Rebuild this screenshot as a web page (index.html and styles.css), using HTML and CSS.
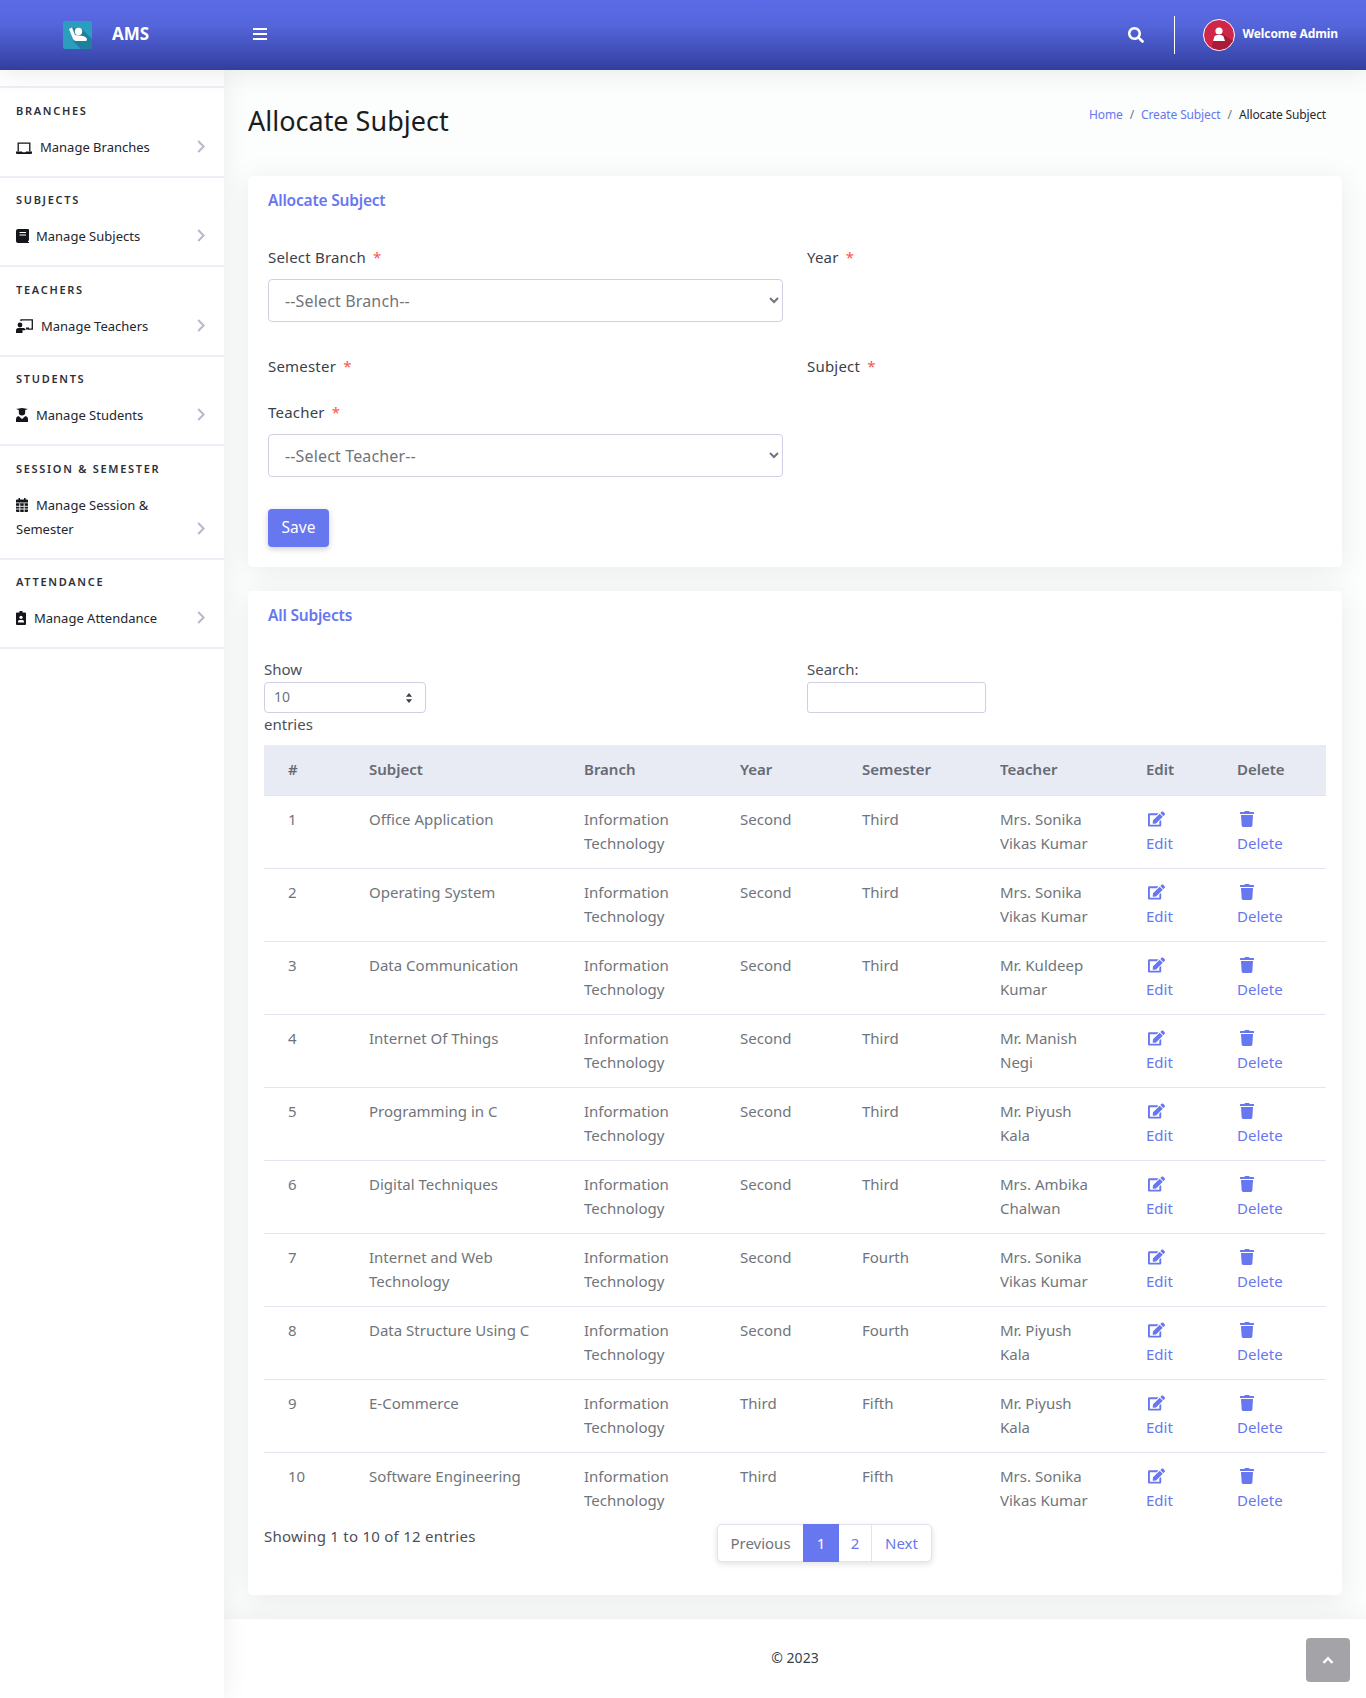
FILE: index.html
```html
<!DOCTYPE html>
<html lang="en">
<head>
  <meta charset="UTF-8">
  <meta name="viewport" content="width=device-width,initial-scale=1.0">
  <title>Allocate Subject</title>
  <link rel="stylesheet" href="styles.css">
</head>
<body>
  <svg class="sprite" aria-hidden="true">
    <symbol id="i-edit" viewBox="0 0 576 512"><path fill="currentColor" d="M402.6 83.2l90.2 90.2c3.8 3.8 3.8 10 0 13.8L274.4 405.6l-92.8 10.3c-12.4 1.4-22.9-9.1-21.5-21.5l10.3-92.8L388.8 83.2c3.8-3.8 10-3.8 13.8 0zm162-22.9l-48.8-48.8c-15.2-15.2-39.9-15.2-55.2 0l-35.4 35.4c-3.8 3.8-3.8 10 0 13.8l90.2 90.2c3.8 3.8 10 3.8 13.8 0l35.4-35.4c15.2-15.3 15.2-40 0-55.2zM384 346.2V448H64V128h229.8c3.2 0 6.2-1.3 8.5-3.5l40-40c7.6-7.6 2.2-20.5-8.5-20.5H48C21.5 64 0 85.5 0 112v352c0 26.5 21.5 48 48 48h352c26.5 0 48-21.5 48-48V306.2c0-10.7-12.9-16-20.5-8.5l-40 40c-2.2 2.3-3.5 5.3-3.5 8.5z"/></symbol>
    <symbol id="i-trash" viewBox="0 0 448 512"><path fill="currentColor" d="M432 32H312l-9.4-18.7A24 24 0 0 0 281.1 0H166.8a23.72 23.72 0 0 0-21.4 13.3L136 32H16A16 16 0 0 0 0 48v32a16 16 0 0 0 16 16h416a16 16 0 0 0 16-16V48a16 16 0 0 0-16-16zM53.2 467a48 48 0 0 0 47.9 45h245.8a48 48 0 0 0 47.9-45L416 128H32z"/></symbol>
    <symbol id="i-chevron" viewBox="0 0 8 13"><path fill="none" stroke="currentColor" stroke-width="2" d="M1.2 1l5.4 5.5-5.4 5.5"/></symbol>
  </svg>

  <header class="topbar">
    <div class="brand">
      <svg class="brand-logo" viewBox="0 0 29 28">
        <rect width="29" height="28" rx="2" fill="#2b9dbe"/>
        <path d="M9 7l10 1 10 10v8a2 2 0 0 1-2 2H18l-8-8z" fill="#1f7f9f"/>
        <circle cx="15.500" cy="10.500" r="3.700" fill="#fff"/>
        <path d="M6 8l3-1.500L12 14l8 1q4 1 4 4 0 1-2 1h-9q-2 0-3-2z" fill="#fff"/>
      </svg>
      <span class="brand-name">AMS</span>
    </div>
    <button class="menu-btn" type="button" aria-label="Menu"><span></span><span></span><span></span></button>
    <div class="topbar-right">
      <svg class="search-icon" viewBox="0 0 512 512"><path fill="currentColor" d="M505 442.7L405.3 343c-4.500-4.500-10.600-7-17-7H372c27.600-35.300 44-79.700 44-128C416 93.100 322.900 0 208 0S0 93.100 0 208s93.100 208 208 208c48.300 0 92.700-16.400 128-44v16.300c0 6.400 2.500 12.500 7 17l99.700 99.700c9.400 9.400 24.600 9.400 33.900 0l28.300-28.300c9.400-9.400 9.400-24.600.1-34zM208 336c-70.700 0-128-57.200-128-128 0-70.700 57.200-128 128-128 70.700 0 128 57.200 128 128 0 70.700-57.200 128-128 128z"/></svg>
      <span class="topbar-divider"></span>
      <svg class="avatar" viewBox="0 0 32 32">
        <circle cx="16" cy="16" r="15.500" fill="#d0264a" stroke="#fff"/>
        <path d="M10 22l6-10 14 10-6 7-8 2.300-7-3z" fill="#a81c3a"/>
        <circle cx="16" cy="12" r="3.600" fill="#fff"/>
        <path d="M10 22l1.500-4.500q1-1.500 2.500-1.500h4q1.500 0 2.500 1.500L22 22z" fill="#fff"/>
      </svg>
      <span class="welcome">Welcome Admin</span>
    </div>
  </header>

  <div class="layout">
    <aside class="sidebar">
      <section class="side-group">
        <h6>Branches</h6>
        <a class="side-item" href="#">
          <span class="side-text">
            <svg class="side-icon ic-laptop" viewBox="0 0 16 12"><path fill="none" stroke="currentColor" stroke-width="1.300" d="M2.200 9.500V1.200h11.600v8.300"/><path fill="currentColor" d="M0 9.500h6l.5.800h3l.5-.8h6V11q0 1-1 1H1q-1 0-1-1z"/></svg>Manage Branches
          </span>
          <svg class="chevron"><use href="#i-chevron"/></svg>
        </a>
      </section>
      <section class="side-group">
        <h6>Subjects</h6>
        <a class="side-item" href="#">
          <span class="side-text">
            <svg class="side-icon ic-book" viewBox="0 0 13 14"><path fill="currentColor" d="M2 0h10a1 1 0 0 1 1 1v10.500l-1 .5v1h1v1H2a2 2 0 0 1-2-2V2a2 2 0 0 1 2-2z"/><path stroke="#fff" d="M3.500 3.500h6.500M3.500 6h6.500"/></svg>Manage Subjects
          </span>
          <svg class="chevron"><use href="#i-chevron"/></svg>
        </a>
      </section>
      <section class="side-group">
        <h6>Teachers</h6>
        <a class="side-item" href="#">
          <span class="side-text">
            <svg class="side-icon ic-teacher" viewBox="0 0 17 14"><path fill="none" stroke="currentColor" stroke-width="1.300" d="M5 2V.9h11.300v9.200h-4"/><path fill="currentColor" d="M10 8.500h3v2h-3z"/><circle cx="4" cy="6" r="2.400" fill="currentColor"/><path fill="currentColor" d="M0 14v-2.500Q0 9 2.500 9H5l3 0 2 1.500-2 1-1.500-.5V14z"/></svg>Manage Teachers
          </span>
          <svg class="chevron"><use href="#i-chevron"/></svg>
        </a>
      </section>
      <section class="side-group">
        <h6>Students</h6>
        <a class="side-item" href="#">
          <span class="side-text">
            <svg class="side-icon ic-student" viewBox="0 0 12 14"><path fill="currentColor" d="M0 1l6-1 6 1-2.800 1v2.300a3.200 3.200 0 0 1-6.400 0V2zM0 14v-3q0-2.500 2.500-3L6 11l3.500-3q2.500.5 2.500 3v3z"/></svg>Manage Students
          </span>
          <svg class="chevron"><use href="#i-chevron"/></svg>
        </a>
      </section>
      <section class="side-group">
        <h6>Session &amp; Semester</h6>
        <a class="side-item" href="#">
          <span class="side-text">
            <svg class="side-icon ic-calendar" viewBox="0 0 12 14"><path fill="currentColor" d="M2.500 0h1.500v1.500h4V0h1.500v1.500H11a1 1 0 0 1 1 1V4.500H0V2.500a1 1 0 0 1 1-1h1.500zM0 5.300h12V13a1 1 0 0 1-1 1H1a1 1 0 0 1-1-1z"/><path stroke="#fff" stroke-width=".9" d="M0 8.300h12M0 11h12M3.800 5.300V14M8.200 5.300V14"/></svg>Manage Session &amp; Semester
          </span>
          <svg class="chevron"><use href="#i-chevron"/></svg>
        </a>
      </section>
      <section class="side-group">
        <h6>Attendance</h6>
        <a class="side-item" href="#">
          <span class="side-text">
            <svg class="side-icon ic-badge" viewBox="0 0 10 14"><path fill="currentColor" d="M1 1.500h2.500V0h3v1.500H9a1 1 0 0 1 1 1V13a1 1 0 0 1-1 1H1a1 1 0 0 1-1-1V2.500a1 1 0 0 1 1-1z"/><circle cx="5" cy="6.300" r="1.600" fill="#fff"/><path fill="#fff" d="M2 11.500v-1q0-1.500 1.500-1.500h3Q8 9 8 10.500v1z"/></svg>Manage Attendance
          </span>
          <svg class="chevron"><use href="#i-chevron"/></svg>
        </a>
      </section>
    </aside>

    <div class="main">
      <main class="content">
        <div class="page-head">
          <h1>Allocate Subject</h1>
          <nav class="crumbs">
            <a href="#">Home</a><span class="sep">/</span><a href="#">Create Subject</a><span class="sep">/</span><span class="crumb-now">Allocate Subject</span>
          </nav>
        </div>

        <section class="card card-form">
          <h4 class="card-title">Allocate Subject</h4>
          <form class="form-grid">
            <div class="field">
              <label>Select Branch <i>*</i></label>
              <select class="form-select"><option>--Select Branch--</option></select>
            </div>
            <div class="field"><label>Year <i>*</i></label></div>
            <div class="field field-short"><label>Semester <i>*</i></label></div>
            <div class="field field-short"><label>Subject <i>*</i></label></div>
            <div class="field">
              <label>Teacher <i>*</i></label>
              <select class="form-select"><option>--Select Teacher--</option></select>
            </div>
            <div class="field"></div>
            <div class="form-actions"><button class="btn-save" type="button">Save</button></div>
          </form>
        </section>

        <section class="card card-table">
          <h4 class="card-title">All Subjects</h4>
          <div class="dt-top">
            <div class="dt-length">
              <div>Show</div>
              <div class="length-box">
                <span>10</span>
                <svg viewBox="0 0 8 13"><path fill="currentColor" d="M4 0l4 5H0zM4 13L0 8h8z"/></svg>
              </div>
              <div class="length-after">entries</div>
            </div>
            <div class="dt-search">
              <label>Search:</label>
              <input type="text">
            </div>
          </div>

          <table class="dt">
            <colgroup>
              <col class="c-num"><col class="c-subject"><col class="c-branch"><col class="c-year"><col class="c-sem"><col class="c-teacher"><col class="c-edit"><col class="c-del">
            </colgroup>
            <thead>
              <tr><th>#</th><th>Subject</th><th>Branch</th><th>Year</th><th>Semester</th><th>Teacher</th><th>Edit</th><th>Delete</th></tr>
            </thead>
            <tbody>
              <tr><td>1</td><td>Office Application</td><td>Information Technology</td><td>Second</td><td>Third</td><td>Mrs. Sonika Vikas Kumar</td><td><a class="act" href="#"><svg class="act-edit"><use href="#i-edit"/></svg>Edit</a></td><td><a class="act" href="#"><svg class="act-del"><use href="#i-trash"/></svg>Delete</a></td></tr>
              <tr><td>2</td><td>Operating System</td><td>Information Technology</td><td>Second</td><td>Third</td><td>Mrs. Sonika Vikas Kumar</td><td><a class="act" href="#"><svg class="act-edit"><use href="#i-edit"/></svg>Edit</a></td><td><a class="act" href="#"><svg class="act-del"><use href="#i-trash"/></svg>Delete</a></td></tr>
              <tr><td>3</td><td>Data Communication</td><td>Information Technology</td><td>Second</td><td>Third</td><td>Mr. Kuldeep Kumar</td><td><a class="act" href="#"><svg class="act-edit"><use href="#i-edit"/></svg>Edit</a></td><td><a class="act" href="#"><svg class="act-del"><use href="#i-trash"/></svg>Delete</a></td></tr>
              <tr><td>4</td><td>Internet Of Things</td><td>Information Technology</td><td>Second</td><td>Third</td><td>Mr. Manish Negi</td><td><a class="act" href="#"><svg class="act-edit"><use href="#i-edit"/></svg>Edit</a></td><td><a class="act" href="#"><svg class="act-del"><use href="#i-trash"/></svg>Delete</a></td></tr>
              <tr><td>5</td><td>Programming in C</td><td>Information Technology</td><td>Second</td><td>Third</td><td>Mr. Piyush Kala</td><td><a class="act" href="#"><svg class="act-edit"><use href="#i-edit"/></svg>Edit</a></td><td><a class="act" href="#"><svg class="act-del"><use href="#i-trash"/></svg>Delete</a></td></tr>
              <tr><td>6</td><td>Digital Techniques</td><td>Information Technology</td><td>Second</td><td>Third</td><td>Mrs. Ambika Chalwan</td><td><a class="act" href="#"><svg class="act-edit"><use href="#i-edit"/></svg>Edit</a></td><td><a class="act" href="#"><svg class="act-del"><use href="#i-trash"/></svg>Delete</a></td></tr>
              <tr><td>7</td><td>Internet and Web Technology</td><td>Information Technology</td><td>Second</td><td>Fourth</td><td>Mrs. Sonika Vikas Kumar</td><td><a class="act" href="#"><svg class="act-edit"><use href="#i-edit"/></svg>Edit</a></td><td><a class="act" href="#"><svg class="act-del"><use href="#i-trash"/></svg>Delete</a></td></tr>
              <tr><td>8</td><td>Data Structure Using C</td><td>Information Technology</td><td>Second</td><td>Fourth</td><td>Mr. Piyush Kala</td><td><a class="act" href="#"><svg class="act-edit"><use href="#i-edit"/></svg>Edit</a></td><td><a class="act" href="#"><svg class="act-del"><use href="#i-trash"/></svg>Delete</a></td></tr>
              <tr><td>9</td><td>E-Commerce</td><td>Information Technology</td><td>Third</td><td>Fifth</td><td>Mr. Piyush Kala</td><td><a class="act" href="#"><svg class="act-edit"><use href="#i-edit"/></svg>Edit</a></td><td><a class="act" href="#"><svg class="act-del"><use href="#i-trash"/></svg>Delete</a></td></tr>
              <tr><td>10</td><td>Software Engineering</td><td>Information Technology</td><td>Third</td><td>Fifth</td><td>Mrs. Sonika Vikas Kumar</td><td><a class="act" href="#"><svg class="act-edit"><use href="#i-edit"/></svg>Edit</a></td><td><a class="act" href="#"><svg class="act-del"><use href="#i-trash"/></svg>Delete</a></td></tr>
            </tbody>
          </table>

          <div class="dt-bottom">
            <div class="dt-info">Showing 1 to 10 of 12 entries</div>
            <ul class="pager">
              <li class="pg-prev">Previous</li>
              <li class="pg-on">1</li>
              <li class="pg-two">2</li>
              <li class="pg-next">Next</li>
            </ul>
          </div>
        </section>
      </main>
      <footer class="footer">© 2023</footer>
    </div>
  </div>

  <a class="back-top" href="#" aria-label="Back to top">
    <svg viewBox="0 0 12 8"><path fill="none" stroke="#fff" stroke-width="2.400" d="M1.500 6.800L6 2.200l4.500 4.600"/></svg>
  </a>
</body>
</html>
```

FILE: styles.css
```css
* {
  box-sizing: border-box;
}
body {
  margin: 0;
  min-height: 1698px;
  font-family: "Noto Sans", Arial, sans-serif;
  font-size: 15px;
  line-height: 24px;
  color: #70757c;
  background: #fcfdfd;
}
a {
  text-decoration: none;
}
.sprite {
  display: none;
}

/* barra do topo */
.topbar {
  position: relative;
  z-index: 3;
  display: flex;
  align-items: center;
  height: 70px;
  padding-left: 63px;
  color: #fff;
  background: linear-gradient(180deg, #5b6be7 0%, #5566dc 35%, #323e9e 100%);
  box-shadow: 0 0 30px rgba(0, 0, 0, 0.1);
}
.brand {
  display: flex;
  align-items: center;
  width: 190px;
}
.brand-logo {
  width: 29px;
  height: 28px;
}
.brand-name {
  margin: -2px 0 0 20px;
  font-size: 17px;
  font-weight: 700;
}
.menu-btn {
  display: flex;
  flex-direction: column;
  gap: 3px;
  width: 14px;
  margin-top: -2px;
  padding: 0;
  border: none;
  background: none;
}
.menu-btn span {
  height: 2px;
  width: 14px;
  background: #fff;
}
.topbar-right {
  display: flex;
  align-items: center;
  margin-left: auto;
  padding-right: 28px;
}
.search-icon {
  width: 16px;
  height: 16px;
  color: #fff;
}
.topbar-divider {
  width: 1px;
  height: 38px;
  margin: 0 28px 0 30px;
  background: #fff;
}
.avatar {
  width: 32px;
  height: 32px;
}
.welcome {
  margin: -2px 0 0 8px;
  font-size: 12px;
  font-weight: 700;
  letter-spacing: -0.1px;
}

/* layout */
.layout {
  display: grid;
  grid-template-columns: 224px 1fr;
  min-height: 1628px;
}

/* menu lateral */
.sidebar {
  position: relative;
  z-index: 2;
  padding-top: 16px;
  background: #fff;
  box-shadow: 0 0 24px rgba(0, 0, 0, 0.08);
}
.side-group {
  padding: 12.5px 16px 17px;
  border-top: 2px solid #eeeef6;
}
.side-group:last-child {
  border-bottom: 2px solid #eeeef6;
}
.side-group h6 {
  margin: 0 0 14px;
  font-size: 11px;
  line-height: 20px;
  font-weight: 600;
  letter-spacing: 1.7px;
  text-transform: uppercase;
  color: #2c2f3a;
}
.side-item {
  display: flex;
  align-items: flex-end;
  justify-content: space-between;
  font-size: 13px;
  color: #23262f;
}
.side-text {
  max-width: 165px;
}
.side-icon {
  display: inline-block;
  margin-right: 8px;
  vertical-align: -2px;
  color: #14161c;
}
.ic-laptop {
  width: 16px;
  height: 12px;
}
.ic-book {
  width: 13px;
  height: 14px;
  margin-right: 7px;
}
.ic-teacher {
  width: 17px;
  height: 14px;
}
.ic-student {
  width: 12px;
  height: 14px;
}
.ic-calendar {
  width: 12px;
  height: 14px;
}
.ic-badge {
  width: 10px;
  height: 14px;
  margin-right: 8px;
}
.chevron {
  flex: none;
  width: 8px;
  height: 13px;
  margin: 0 3px 6px 0;
  color: #b7b9cc;
}

/* conteudo */
.main {
  display: flex;
  flex-direction: column;
  min-width: 0;
}
.content {
  flex: 1;
  padding: 0 24px;
}
.page-head {
  display: flex;
  justify-content: space-between;
  height: 106px;
  padding-top: 31px;
}
.page-head h1 {
  margin: 0;
  font-size: 27px;
  line-height: 40px;
  font-weight: 400;
  color: #191d21;
}
.crumbs {
  padding: 2px 16px 0 0;
  font-size: 12px;
  letter-spacing: -0.13px;
}
.crumbs a {
  color: #6777ef;
}
.crumbs .sep {
  margin: 0 7px;
  color: #6c757d;
}
.crumb-now {
  color: #26282e;
}

.card {
  background: #fff;
  border-radius: 5px;
  box-shadow: 0 4px 30px rgba(0, 0, 0, 0.08);
}
.card-form {
  height: 391px;
  padding: 12px 20px 20px;
}
.card-table {
  height: 1004px;
  margin-top: 24px;
  padding: 12px 16px 0;
}
.card-title {
  margin: 0;
  font-size: 15.5px;
  line-height: 24px;
  font-weight: 600;
  letter-spacing: -0.2px;
  color: #6777ef;
}
.card-table .card-title {
  padding-left: 4px;
}

/* formulario */
.form-grid {
  display: grid;
  grid-template-columns: 515px 1fr;
  column-gap: 24px;
  margin-top: 33px;
}
.field {
  margin-bottom: 32px;
}
.field-short {
  margin-bottom: 12px;
}
.field label {
  display: block;
  margin-bottom: 10px;
  letter-spacing: 0.2px;
  color: #3c3f4b;
}
.field label i {
  margin-left: 3px;
  font-style: normal;
  color: #fc544b;
}
.form-select {
  display: block;
  width: 100%;
  height: 43px;
  padding: 0 12px;
  font: inherit;
  font-size: 16px;
  letter-spacing: 0.15px;
  color: #70757c;
  background: #fff;
  border: 1px solid #d0d0e2;
  border-radius: 4px;
}
.form-actions {
  grid-column: 1 / -1;
}
.btn-save {
  display: block;
  width: 61px;
  height: 38px;
  padding: 0 0 2px;
  font: inherit;
  font-size: 15.5px;
  color: #fff;
  background: #6777ef;
  border: none;
  border-radius: 4px;
  box-shadow: 0 2px 6px rgba(0, 0, 0, 0.2);
}

/* tabela */
.dt-top {
  display: grid;
  grid-template-columns: 543px 1fr;
  margin-top: 30px;
  color: #4c4f5a;
}
.length-box {
  display: flex;
  align-items: center;
  justify-content: space-between;
  width: 162px;
  height: 31px;
  margin-top: 1px;
  padding: 0 12px 0 9px;
  font-size: 14px;
  color: #70757c;
  background: #fff;
  border: 1px solid #d0d0e2;
  border-radius: 4px;
}
.length-box span {
  margin-top: -1px;
}
.length-after {
  margin-top: -1px;
}
.length-box svg {
  width: 8px;
  height: 10px;
  color: #3c3f4b;
}
.dt-search label {
  display: block;
}
.dt-search input {
  display: block;
  width: 179px;
  height: 31px;
  margin-top: 1px;
  background: #fff;
  border: 1px solid #d0d0e2;
  border-radius: 3px;
}
.dt {
  width: 1062px;
  margin-top: 9px;
  table-layout: fixed;
  border-collapse: collapse;
}
.c-num { width: 81px; }
.c-subject { width: 215px; }
.c-branch { width: 156px; }
.c-year { width: 122px; }
.c-sem { width: 138px; }
.c-teacher { width: 146px; }
.c-edit { width: 91px; }
.c-del { width: 113px; }
.dt th {
  height: 50px;
  padding: 0 24px 2px;
  text-align: left;
  font-weight: 600;
  color: #666a75;
  background: #e8ebf3;
  border-bottom: 1px solid #e1e4ec;
}
.dt td {
  padding: 11px 24px 13px;
  vertical-align: top;
  border-bottom: 1px solid #e3e6f2;
}
.dt tbody tr:last-child td {
  border-bottom: none;
}
.act {
  display: block;
  color: #6777ef;
}
.act svg {
  display: block;
  height: 16px;
  margin: 4px 0;
  color: #6777ef;
}
.act .act-edit {
  width: 17px;
  margin-left: 2px;
}
.act .act-del {
  width: 14px;
  margin-left: 3px;
}
.dt-bottom {
  display: grid;
  grid-template-columns: 453px 1fr;
  margin-top: -1px;
}
.dt-info {
  letter-spacing: 0.25px;
  color: #4c4f5a;
}
.pager {
  display: flex;
  width: 215px;
  height: 38px;
  margin: 0;
  padding: 0;
  list-style: none;
  line-height: 36px;
  text-align: center;
  background: #fff;
  border: 1px solid #e3e2f0;
  border-radius: 5px;
  box-shadow: 0 2px 6px rgba(0, 0, 0, 0.12);
}
.pager li {
  color: #6777ef;
}
.pager .pg-prev {
  width: 85px;
  color: #70757c;
}
.pager .pg-on {
  width: 36px;
  height: 38px;
  margin-top: -1px;
  line-height: 38px;
  color: #fff;
  background: #6777ef;
}
.pager .pg-two {
  width: 33px;
  border-right: 1px solid #e3e2f0;
}
.pager .pg-next {
  width: 59px;
}

.footer {
  position: relative;
  height: 79px;
  padding-top: 27px;
  font-size: 14px;
  text-align: center;
  color: #3b3e48;
  background: #fff;
  box-shadow: 0 0 30px rgba(0, 0, 0, 0.08);
}
.back-top {
  position: fixed;
  right: 16px;
  bottom: 16px;
  display: flex;
  align-items: center;
  justify-content: center;
  width: 44px;
  height: 44px;
  background: #a3a3a8;
  border-radius: 4px;
}
.back-top svg {
  width: 12px;
  height: 8px;
}
```
